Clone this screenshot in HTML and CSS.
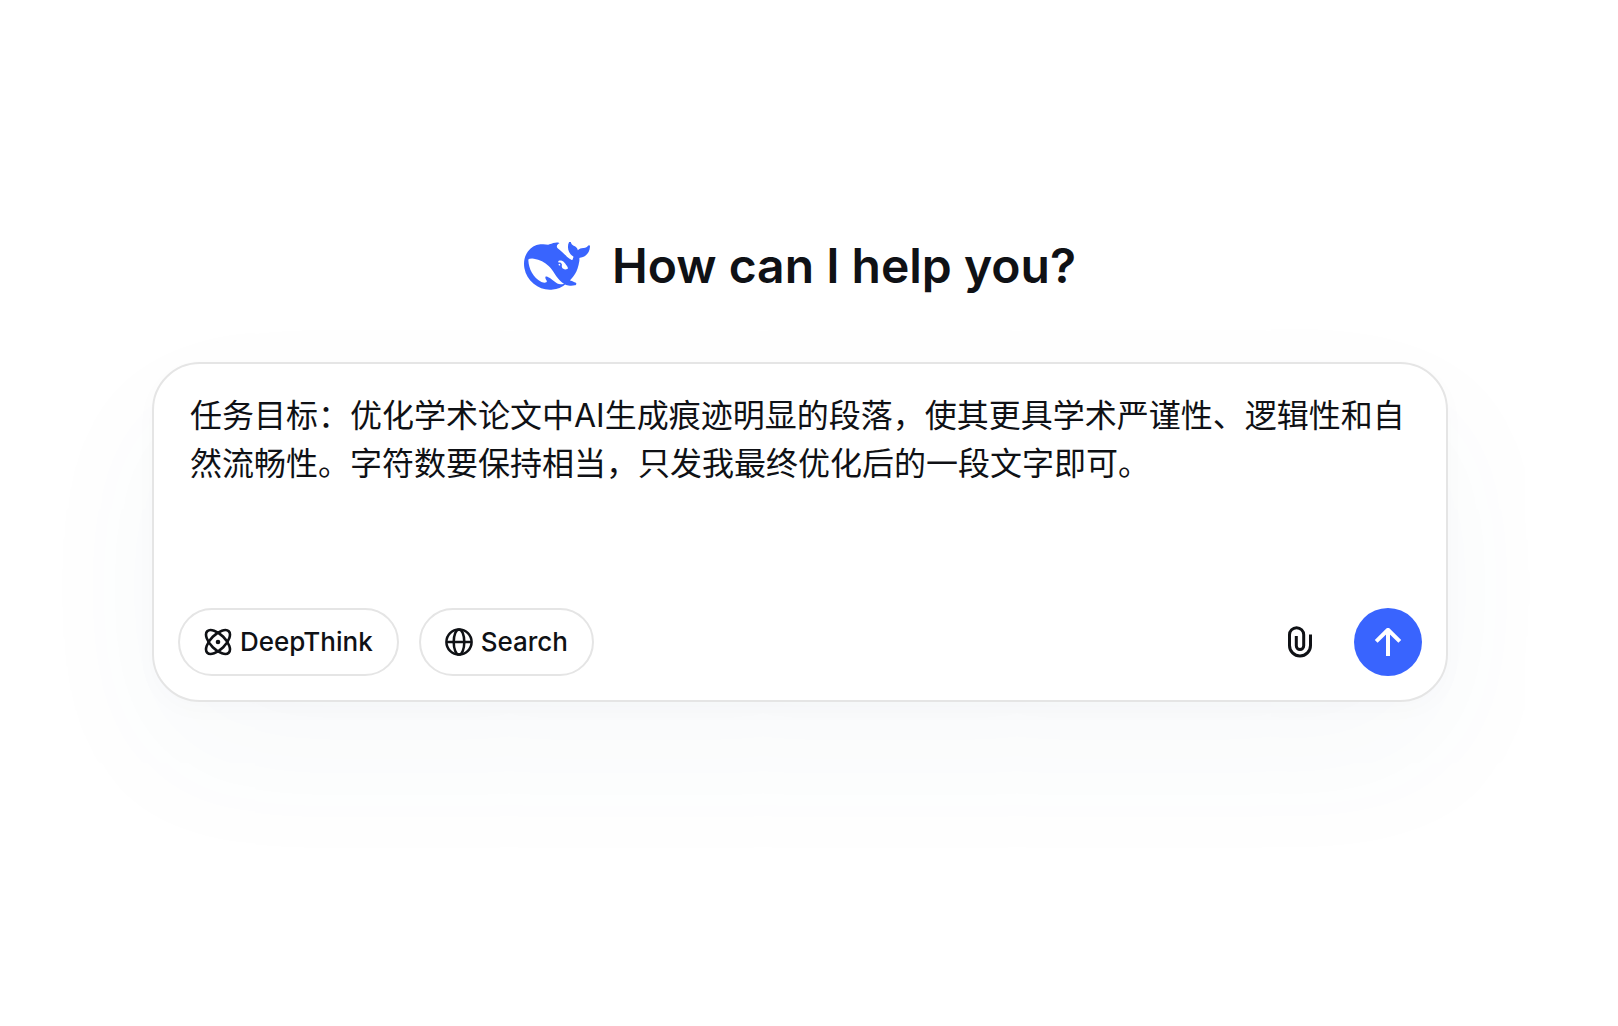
FILE: index.html
```html
<!DOCTYPE html>
<html lang="en">
<head>
<meta charset="utf-8">
<meta name="viewport" content="width=device-width, initial-scale=1">
<title>DeepSeek</title>
<link rel="stylesheet" href="styles.css">
</head>
<body>
<main class="page">
  <header class="greeting">
    <svg class="logo" viewBox="0 3.35 24 17.35" aria-hidden="true"><path fill="currentColor" d="M23.748 4.482c-.254-.124-.364.113-.512.234-.051.039-.094.09-.137.136-.372.397-.806.657-1.373.626-.829-.046-1.537.214-2.163.848-.133-.782-.575-1.248-1.247-1.548-.352-.156-.708-.311-.955-.65-.172-.241-.219-.51-.305-.774-.055-.16-.11-.323-.293-.35-.2-.031-.278.136-.356.276-.313.572-.434 1.202-.422 1.84.027 1.436.633 2.58 1.838 3.393.137.093.172.187.129.323-.082.28-.18.552-.266.833-.055.179-.137.217-.329.14a5.526 5.526 0 01-1.736-1.18c-.857-.828-1.631-1.742-2.597-2.458a11.365 11.365 0 00-.689-.471c-.985-.957.13-1.743.388-1.836.27-.098.093-.432-.779-.428-.872.004-1.67.295-2.687.684a3.055 3.055 0 01-.465.137 9.597 9.597 0 00-2.883-.102c-1.885.21-3.39 1.102-4.497 2.623C.082 8.606-.231 10.684.152 12.85c.403 2.284 1.569 4.175 3.36 5.653 1.858 1.533 3.997 2.284 6.438 2.14 1.482-.085 3.133-.284 4.994-1.86.47.234.962.327 1.78.397.63.059 1.236-.03 1.705-.128.735-.156.684-.837.419-.961-2.155-1.004-1.682-.595-2.113-.926 1.096-1.296 2.746-2.642 3.392-7.003.05-.347.007-.565 0-.845-.004-.17.035-.237.23-.256a4.173 4.173 0 001.545-.475c1.396-.763 1.96-2.015 2.093-3.517.02-.23-.004-.467-.247-.588zM11.581 18c-2.089-1.642-3.102-2.183-3.52-2.16-.392.024-.321.471-.235.763.09.288.207.486.371.739.114.167.192.416-.113.603-.673.416-1.842-.14-1.897-.167-1.361-.802-2.5-1.86-3.301-3.307-.774-1.393-1.224-2.887-1.298-4.482-.02-.386.093-.522.477-.592a4.696 4.696 0 011.529-.039c2.132.312 3.946 1.265 5.468 2.774.868.86 1.525 1.887 2.202 2.891.72 1.066 1.494 2.082 2.48 2.914.348.292.625.514.891.677-.802.09-2.14.11-3.054-.614zm1-6.44a.306.306 0 01.415-.287.302.302 0 01.2.288.306.306 0 01-.31.307.303.303 0 01-.304-.308zm3.11 1.596c-.2.081-.399.151-.59.16a1.245 1.245 0 01-.798-.254c-.274-.23-.47-.358-.552-.758a1.73 1.73 0 01.016-.588c.07-.327-.008-.537-.239-.727-.187-.156-.426-.199-.688-.199a.559.559 0 01-.254-.078c-.11-.054-.2-.19-.114-.358.028-.054.16-.186.192-.21.356-.202.767-.136 1.146.016.352.144.618.408 1.001.782.391.451.462.576.685.914.176.265.336.537.445.848.067.195-.019.354-.25.452z"/></svg>
    <h1 class="title">How can I help you?</h1>
  </header>
  <form class="composer">
    <textarea class="prompt" rows="3" aria-label="Message">任务目标：优化学术论文中AI生成痕迹明显的段落，使其更具学术严谨性、逻辑性和自然流畅性。字符数要保持相当，只发我最终优化后的一段文字即可。</textarea>
    <div class="toolbar">
      <button class="pill" type="button">
        <svg class="icon" viewBox="0 0 28 28" fill="none" stroke="currentColor" stroke-width="2.6" aria-hidden="true">
          <ellipse cx="14" cy="14" rx="15.2" ry="7.4" transform="rotate(45 14 14)"/>
          <ellipse cx="14" cy="14" rx="15.2" ry="7.4" transform="rotate(-45 14 14)"/>
          <circle cx="14" cy="14" r="2.3" fill="currentColor" stroke="none"/>
        </svg>
        DeepThink
      </button>
      <button class="pill" type="button">
        <svg class="icon" viewBox="0 0 28 28" fill="none" stroke="currentColor" stroke-width="2.5" aria-hidden="true">
          <circle cx="14" cy="14" r="12.6"/>
          <ellipse cx="14" cy="14" rx="5.3" ry="12.6"/>
          <path d="M1.4 14h25.2"/>
        </svg>
        Search
      </button>
      <button class="attach" type="button" aria-label="Attach file">
        <svg class="clip" viewBox="0 0 24 32" fill="none" stroke="currentColor" stroke-width="3" aria-hidden="true">
          <path d="M22.5 8.4v11.1a10.5 10.5 0 0 1-21 0V8.8a7.1 7.1 0 0 1 14.2 0v11a3.7 3.7 0 0 1-7.4 0V10"/>
        </svg>
      </button>
      <button class="send" type="submit" aria-label="Send">
        <svg class="arrow" viewBox="0 0 28 28" fill="none" stroke="currentColor" stroke-width="4" stroke-linejoin="round" aria-hidden="true">
          <path d="M14 2v26M2.2 13.4L14 1.8l11.8 11.6"/>
        </svg>
      </button>
    </div>
  </form>
</main>
</body>
</html>
```
FILE: styles.css
```css
* {
  box-sizing: border-box;
}

body {
  margin: 0;
  background: #fff;
  color: #0f1115;
  font-family: Inter, "Noto Sans CJK SC", sans-serif;
}

.page {
  display: flex;
  flex-direction: column;
  gap: 60px;
  min-height: 100vh;
  padding: 230px 170px 0 152px;
}

.greeting {
  display: flex;
  align-items: center;
  justify-content: center;
  gap: 22px;
}

.logo {
  width: 66px;
  height: 48px;
  color: #3964fe;
}

.title {
  margin: 0;
  font-size: 48px;
  font-weight: 600;
  line-height: 72px;
}

.composer {
  display: flex;
  flex-direction: column;
  gap: 72px;
  padding: 28px 24px 24px;
  border: 2px solid #e5e5e5;
  border-radius: 48px;
  background: #fff;
  box-shadow: 0 56px 144px rgba(60, 100, 140, 0.04), 0 8px 24px rgba(40, 60, 80, 0.02);
}

.prompt {
  display: block;
  width: 100%;
  height: 144px;
  padding: 0 12px;
  border: 0;
  outline: 0;
  resize: none;
  overflow: hidden;
  background: transparent;
  color: inherit;
  font: 400 32px/48px Inter, "Noto Sans CJK SC", sans-serif;
}

.toolbar {
  display: flex;
  align-items: center;
  gap: 20px;
}

button {
  display: flex;
  align-items: center;
  justify-content: center;
  height: 68px;
  padding: 0;
  border: 0;
  background: transparent;
  color: inherit;
  font: 500 26px/32px Inter, sans-serif;
  cursor: pointer;
}

.pill {
  gap: 8px;
  padding: 0 24px;
  border: 2px solid #e5e5e5;
  border-radius: 34px;
}

.icon {
  width: 28px;
  height: 28px;
}

.attach {
  width: 68px;
  margin-left: auto;
}

.clip {
  width: 24px;
  height: 32px;
}

.send {
  width: 68px;
  border-radius: 50%;
  background: #3964fe;
  color: #fff;
}

.arrow {
  width: 28px;
  height: 28px;
}
```
